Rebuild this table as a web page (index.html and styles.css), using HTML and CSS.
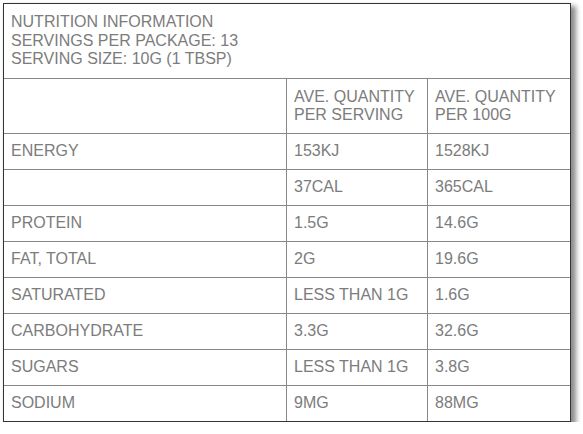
FILE: index.html
```html
<!DOCTYPE html>
<html>
<head>
<meta charset="utf-8">
<link rel="stylesheet" href="styles.css">
</head>
<body>
<div class="panel">
  <div class="title">NUTRITION INFORMATION<br>SERVINGS PER PACKAGE: 13<br>SERVING SIZE: 10G (1 TBSP)</div>
  <div class="grid">
    <div class="cell head"></div>
    <div class="cell head">AVE. QUANTITY<br>PER SERVING</div>
    <div class="cell head last">AVE. QUANTITY<br>PER 100G</div>

    <div class="cell">ENERGY</div>
    <div class="cell">153KJ</div>
    <div class="cell last">1528KJ</div>

    <div class="cell"></div>
    <div class="cell">37CAL</div>
    <div class="cell last">365CAL</div>

    <div class="cell">PROTEIN</div>
    <div class="cell">1.5G</div>
    <div class="cell last">14.6G</div>

    <div class="cell">FAT, TOTAL</div>
    <div class="cell">2G</div>
    <div class="cell last">19.6G</div>

    <div class="cell">SATURATED</div>
    <div class="cell">LESS THAN 1G</div>
    <div class="cell last">1.6G</div>

    <div class="cell">CARBOHYDRATE</div>
    <div class="cell">3.3G</div>
    <div class="cell last">32.6G</div>

    <div class="cell">SUGARS</div>
    <div class="cell">LESS THAN 1G</div>
    <div class="cell last">3.8G</div>

    <div class="cell bottom">SODIUM</div>
    <div class="cell bottom">9MG</div>
    <div class="cell bottom last">88MG</div>
  </div>
</div>
</body>
</html>
```

FILE: styles.css
```css
html, body {
  margin: 0;
  padding: 0;
  background: #ffffff;
}
body {
  font-family: "Liberation Sans", Arial, sans-serif;
  font-size: 16px;
  color: #7c7c7c;
}
.panel {
  box-sizing: border-box;
  margin: 3px 0 0 3px;
  width: 568px;
  border: 1px solid #333333;
  box-shadow: 4px 4px 5px 1px #8c8c8c;
  background: #ffffff;
}
.title {
  box-sizing: border-box;
  height: 75px;
  padding: 9px 7px 0 7px;
  line-height: 18.5px;
  border-bottom: 1px solid #888888;
}
.grid {
  display: grid;
  grid-template-columns: 283px 141px 142px;
  grid-template-rows: 55px repeat(7, 36px) 35px;
}
.cell {
  box-sizing: border-box;
  display: flex;
  align-items: center;
  padding: 0 7px 1px 7px;
  line-height: 18.5px;
  border-right: 1px solid #888888;
  border-bottom: 1px solid #888888;
}
.cell.head {
  padding-bottom: 0;
}
.cell.last {
  border-right: none;
}
.cell.bottom {
  border-bottom: none;
}
```
